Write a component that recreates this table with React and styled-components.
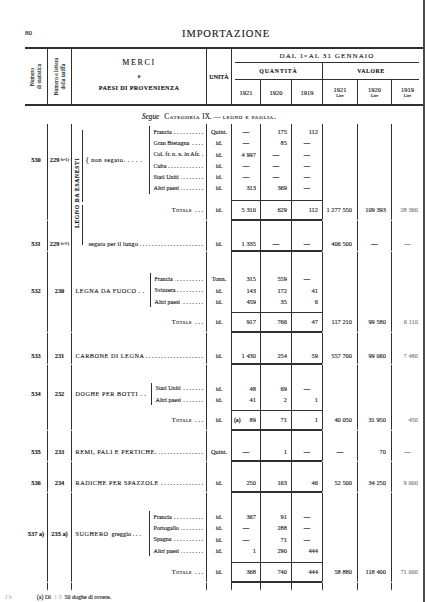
import React from "react";
import styled, { createGlobalStyle } from "styled-components";

const INK = "#161616";
const RULE = "#2f2f2f";
const LH = 11.3;
const TOT = 19.5;
const COLS = "22px 24px 135px 25px 29px 31px 31px 35px 34px 32px";

const GlobalStyle = createGlobalStyle`
  *, *::before, *::after { box-sizing: border-box; }
  html, body { margin: 0; padding: 0; background: #fff; }
  body {
    font-family: "Liberation Serif", "DejaVu Serif", serif;
    color: ${INK};
    -webkit-text-stroke: 0.12px ${INK};
  }
`;

const rule = ({ $rule }) =>
  $rule === "thick"
    ? `border-left: 1.5px solid ${RULE};`
    : $rule === "thin"
    ? `border-left: 1px solid ${RULE};`
    : "";

const Sheet = styled.div`
  width: 425px;
  height: 602px;
  padding-left: 25px;
  border-right: 2px solid #4a4a4a;
  overflow: hidden;
  display: flex;
  flex-direction: column;
`;

/* ---------- title ---------- */

const TitleBar = styled.header`
  height: 47px;
  flex-shrink: 0;
  padding-top: 19px;
  display: grid;
  grid-template-columns: 157px auto;
  align-items: center;
`;

const PageNo = styled.span`
  font-size: 7px;
`;

const Title = styled.h1`
  margin: 0;
  font-size: 10.5px;
  font-weight: normal;
  letter-spacing: 0.9px;
`;

/* ---------- column heads ---------- */

const Head = styled.div`
  display: grid;
  flex-shrink: 0;
  grid-template-columns: ${COLS};
  height: 59px;
  border-top: 2px solid ${RULE};
  border-bottom: 2px solid ${RULE};
`;

const HCell = styled.div`
  ${rule};
  display: flex;
  align-items: center;
  justify-content: center;
  min-width: 0;
`;

const Turned = styled.div`
  writing-mode: vertical-rl;
  transform: rotate(180deg);
  font-size: 5.6px;
  line-height: 7px;
  text-align: center;
  white-space: nowrap;
`;

const GoodsHead = styled(HCell)`
  flex-direction: column;
  justify-content: flex-start;
  padding-top: 8px;
`;

const Merci = styled.div`
  font-size: 8px;
  line-height: 12px;
  letter-spacing: 1.6px;
`;

const Conj = styled.div`
  font-size: 6px;
  line-height: 14px;
`;

const Paesi = styled.div`
  font-size: 6.2px;
  line-height: 10px;
  font-weight: bold;
  letter-spacing: 0.35px;
`;

const UnitHead = styled.span`
  font-size: 6px;
  font-weight: bold;
`;

const Period = styled.div`
  grid-column: 5 / -1;
  ${rule};
  display: grid;
  grid-template-columns: 28px 31px 31px 35px 34px 32px;
  grid-template-rows: 14px 17px 1fr;
`;

const PeriodTitle = styled.div`
  grid-column: 1 / -1;
  margin: 0 4px 0 3px;
  border-bottom: 1px solid ${RULE};
  display: flex;
  align-items: center;
  justify-content: center;
  font-size: 7px;
  letter-spacing: 1.1px;
  white-space: nowrap;
  sup {
    font-size: 4.5px;
    letter-spacing: 0;
    margin-right: 2px;
  }
`;

const GroupHead = styled.div`
  grid-column: span 3;
  ${rule};
  margin: ${(p) => p.$margin};
  border-bottom: 1px solid ${RULE};
  display: flex;
  align-items: center;
  justify-content: center;
  font-size: 5.8px;
  font-weight: bold;
  letter-spacing: ${(p) => p.$ls}px;
`;

const YearCell = styled.div`
  ${rule};
  display: flex;
  flex-direction: column;
  align-items: center;
  justify-content: center;
  font-size: 6.5px;
  line-height: 7px;
`;

const Lire = styled.span`
  font-size: 4.6px;
  line-height: 6px;
`;

/* ---------- body ---------- */

const Segue = styled.div`
  height: 18px;
  flex-shrink: 0;
  padding: 3px 0 0 117px;
  display: flex;
  align-items: center;
  font-size: 7.2px;
  white-space: nowrap;
  i {
    margin-right: 3px;
  }
`;

const Caps = styled.span`
  font-variant: small-caps;
  letter-spacing: 0.7px;
  margin: 0 2px;
`;

const BlockGrid = styled.div`
  display: grid;
  flex-shrink: 0;
  grid-template-columns: ${COLS};
  grid-template-rows: ${(p) => p.$rows};
`;

const Col = styled.div`
  ${rule};
  grid-column: ${(p) => p.$col};
  grid-row: ${(p) => p.$row || "auto"};
  display: flex;
  flex-direction: column;
  min-width: 0;
  border-bottom: 2px solid ${(p) => (p.$foot ? RULE : "transparent")};
  color: ${(p) => (p.$faded ? "#7a7a7a" : "inherit")};
  -webkit-text-stroke-color: ${(p) => (p.$faded ? "#7a7a7a" : INK)};
`;

const Lines = styled.div`
  flex-shrink: 0;
  padding-top: ${(p) => p.$top}px;
  display: flex;
  flex-direction: column;
`;

const Line = styled.div`
  height: ${LH}px;
  line-height: ${LH}px;
  font-size: 6.4px;
  white-space: nowrap;
  overflow: hidden;
  text-align: ${(p) => p.$align || "right"};
  padding-right: ${(p) => (p.$align === "center" ? 0 : p.$pr ?? 4)}px;
`;

const Mid = styled.div`
  height: ${(p) => p.$n * LH}px;
  display: flex;
  align-items: center;
  justify-content: center;
  font-size: 6.4px;
  font-weight: bold;
  white-space: nowrap;
`;

const Small = styled.span`
  font-size: 5px;
  font-weight: normal;
  margin-left: 1.5px;
`;

const Tot = styled.div`
  margin-top: auto;
  flex-shrink: 0;
  height: ${TOT}px;
  display: flex;
  align-items: center;
  justify-content: ${(p) => p.$justify || "flex-end"};
  padding: 0 ${(p) => p.$pr ?? 4}px 0 ${(p) => p.$pl ?? 0}px;
  border-top: 1px solid ${(p) => (p.$ruled ? RULE : "transparent")};
  font-size: 6.4px;
  white-space: nowrap;
`;

const Mark = styled.span`
  font-weight: bold;
  font-size: 5.6px;
`;

const Upper = styled.div`
  flex-shrink: 0;
  padding-top: ${(p) => p.$top}px;
  display: flex;
`;

const MainDesc = styled.div`
  flex: 0 0 ${(p) => p.$w}px;
  display: flex;
  align-items: center;
  padding-left: ${(p) => p.$pl}px;
  font-size: 6.2px;
  letter-spacing: 0.55px;
  white-space: nowrap;
`;

const Lower = styled.span`
  letter-spacing: 0.1px;
  margin-left: 3px;
`;

const BraceMark = styled.span`
  font-size: 9px;
  color: #555;
  margin-right: 2px;
  letter-spacing: 0;
`;

const Countries = styled.div`
  flex: 1;
  min-width: 0;
  border-left: 1px solid ${RULE};
  padding-left: 4px;
  display: flex;
  flex-direction: column;
`;

const Country = styled.div`
  height: ${LH}px;
  display: flex;
  align-items: center;
  padding-right: 3px;
  font-size: 6.1px;
  white-space: nowrap;
`;

const DescLine = styled.div`
  height: ${LH}px;
  display: flex;
  align-items: center;
  padding: 0 3px 0 ${(p) => p.$pl}px;
  font-size: 6.2px;
  letter-spacing: ${(p) => (p.$caps ? 0.55 : 0.2)}px;
  white-space: nowrap;
`;

const Leader = styled.span`
  flex: 1;
  min-width: 0;
  overflow: hidden;
  direction: rtl;
  margin-left: 2px;
  letter-spacing: 0;
  &::after {
    content: ". . . . . . . . . . . . . . . . . . . . . . . . . . . . . . . . . . . . . . . . . . . . . . . . . .";
  }
`;

const TotLabel = styled.span`
  font-variant: small-caps;
  letter-spacing: 0.6px;
  margin-right: 3px;
`;

const GroupDesc = styled.div`
  ${rule};
  grid-column: 3;
  grid-row: 1 / 3;
  display: flex;
  min-width: 0;
`;

const LabelCol = styled.div`
  width: 10px;
  padding-top: 44px;
  display: flex;
  justify-content: center;
`;

const LabelText = styled.div`
  writing-mode: vertical-rl;
  transform: rotate(180deg);
  height: 60px;
  font-size: 5.6px;
  font-weight: bold;
  letter-spacing: 0.7px;
  text-align: center;
  white-space: nowrap;
`;

const BraceCol = styled.div`
  width: 2px;
  display: flex;
  flex-direction: column;
`;

const BraceSeg = styled.div`
  margin-top: ${(p) => p.$mt}px;
  height: ${(p) => p.$h}px;
  border-left: 1px solid ${RULE};
`;

const SubStack = styled.div`
  flex: 1;
  min-width: 0;
  display: flex;
  flex-direction: column;
`;

const SubDesc = styled.div`
  height: ${(p) => p.$h}px;
  padding-bottom: 2px;
  display: flex;
  flex-direction: column;
`;

const Footnote = styled.div`
  height: 11px;
  flex-shrink: 0;
  display: flex;
  align-items: center;
  font-size: 6px;
  white-space: nowrap;
`;

const NoteText = styled.span`
  margin-left: 25px;
`;

const Faded = styled.span`
  color: #b8b8b8;
  -webkit-text-stroke-color: #b8b8b8;
  margin: ${(p) => p.$m || "0 3px"};
`;

/* ---------- data ---------- */

const entries = {
  e530: {
    num: "530",
    tariff: <>229<Small>b-1)</Small></>,
    top: 2,
    main: <><BraceMark>{"{"}</BraceMark>non segato. . . . .</>,
    mainW: 64.5,
    mainPl: 1,
    rows: [
      { c: "Francia", u: "Quint.", q: ["—", "175", "112"] },
      { c: "Gran Bretagna", u: "id.", q: ["—", "85", "—"] },
      { c: "Col. fr. n. n. in Afr.", u: "id.", q: ["4 997", "—", "—"] },
      { c: "Cuba", u: "id.", q: ["—", "—", "—"] },
      { c: "Stati Uniti", u: "id.", q: ["—", "—", "—"] },
      { c: "Altri paesi", u: "id.", q: ["313", "369", "—"] },
    ],
    total: { u: "id.", q: ["5 310", "629", "112"], v: ["1 277 550", "109 393", "28 360"] },
  },
  e531: {
    num: "531",
    tariff: <>229<Small>b-2)</Small></>,
    top: 17.35,
    desc: "segato per il lungo",
    descPl: 4.5,
    single: { u: "id.", q: ["1 335", "—", "—"], v: ["406 500", "—", "—"] },
  },
  e532: {
    num: "532",
    tariff: "230",
    top: 21.35,
    main: "LEGNA DA FUOCO . .",
    mainW: 77.5,
    rows: [
      { c: "Francia", u: "Tonn.", q: ["315", "559", "—"] },
      { c: "Svizzera", u: "id.", q: ["143", "172", "41"] },
      { c: "Altri paesi", u: "id.", q: ["459", "35", "6"] },
    ],
    total: { u: "id.", q: ["917", "766", "47"], v: ["117 210", "99 580", "6 110"] },
  },
  e533: {
    num: "533",
    tariff: "231",
    top: 17,
    desc: "CARBONE DI LEGNA",
    caps: true,
    single: { u: "id.", q: ["1 430", "254", "59"], v: ["557 700", "99 060", "7 480"] },
  },
  e534: {
    num: "534",
    tariff: "232",
    top: 17.6,
    main: "DOGHE PER BOTTI . .",
    mainW: 78.5,
    rows: [
      { c: "Stati Uniti", u: "id.", q: ["48", "69", "—"] },
      { c: "Altri paesi", u: "id.", q: ["41", "2", "1"] },
    ],
    total: { u: "id.", mark: "(a)", q: ["89", "71", "1"], v: ["40 050", "31 950", "450"] },
  },
  e535: {
    num: "535",
    tariff: "233",
    top: 15,
    desc: "REMI, PALI E PERTICHE.",
    caps: true,
    single: { u: "Quint.", q: ["—", "1", "—"], v: ["—", "70", "—"] },
  },
  e536: {
    num: "536",
    tariff: "234",
    top: 15,
    desc: "RADICHE PER SPAZZOLE",
    caps: true,
    single: { u: "id.", q: ["250", "163", "46"], v: ["52 500", "34 250", "9 000"] },
  },
  e537: {
    num: "537 a)",
    tariff: "235 a)",
    top: 18,
    main: <>SUGHERO<Lower>greggio . . .</Lower></>,
    mainW: 76.5,
    rows: [
      { c: "Francia", u: "id.", q: ["367", "91", "—"] },
      { c: "Portogallo", u: "id.", q: ["—", "288", "—"] },
      { c: "Spagna", u: "id.", q: ["—", "71", "—"] },
      { c: "Altri paesi", u: "id.", q: ["1", "290", "444"] },
    ],
    total: { u: "id.", q: ["368", "740", "444"], v: ["58 880", "118 400", "71 000"] },
  },
};

/* ---------- pieces ---------- */

const Qty = ({ v }) => (
  <Line $align={v === "—" ? "center" : "right"}>{v}</Line>
);

function DescBody({ e }) {
  if (!e.rows) {
    return (
      <Lines $top={e.top}>
        <DescLine $pl={e.descPl ?? 3.5} $caps={e.caps}>
          {e.desc}
          <Leader />
        </DescLine>
      </Lines>
    );
  }
  return (
    <>
      <Upper $top={e.top}>
        <MainDesc $w={e.mainW} $pl={e.mainPl ?? 3.5}>
          {e.main}
        </MainDesc>
        <Countries>
          {e.rows.map((r) => (
            <Country key={r.c}>
              {r.c}
              <Leader />
            </Country>
          ))}
        </Countries>
      </Upper>
      <Tot $pr={3}>
        <TotLabel>Totale</TotLabel>. . .
      </Tot>
    </>
  );
}

function EntryCells({ e, row }) {
  const n = e.rows ? e.rows.length : 1;
  return (
    <>
      <Col $col={1} $row={row}>
        <Lines $top={e.top}>
          <Mid $n={n}>{e.num}</Mid>
        </Lines>
      </Col>
      <Col $col={2} $row={row} $rule="thick">
        <Lines $top={e.top}>
          <Mid $n={n}>{e.tariff}</Mid>
        </Lines>
      </Col>
      <Col $col={4} $row={row} $rule="thin">
        <Lines $top={e.top}>
          {e.rows ? (
            e.rows.map((r) => (
              <Line key={r.c} $align="center">
                {r.u}
              </Line>
            ))
          ) : (
            <Line $align="center">{e.single.u}</Line>
          )}
        </Lines>
        {e.rows && <Tot $justify="center" $pr={0}>{e.total.u}</Tot>}
      </Col>
      {[0, 1, 2].map((i) => (
        <Col key={`q${i}`} $col={5 + i} $row={row} $rule="thin" $foot>
          <Lines $top={e.top}>
            {e.rows ? (
              e.rows.map((r) => <Qty key={r.c} v={r.q[i]} />)
            ) : (
              <Qty v={e.single.q[i]} />
            )}
          </Lines>
          {e.rows && (
            <Tot
              $ruled
              $pl={2}
              $justify={i === 0 && e.total.mark ? "space-between" : "flex-end"}
            >
              {i === 0 && e.total.mark && <Mark>{e.total.mark}</Mark>}
              {e.total.q[i]}
            </Tot>
          )}
        </Col>
      ))}
      {[0, 1, 2].map((i) => {
        const v = e.rows ? e.total.v[i] : e.single.v[i];
        return (
          <Col
            key={`v${i}`}
            $col={8 + i}
            $row={row}
            $rule={i === 0 ? "thick" : "thin"}
            $faded={i === 2}
          >
            {e.rows ? (
              <Tot $pr={5} $justify={v === "—" ? "center" : "flex-end"}>
                {v}
              </Tot>
            ) : (
              <Lines $top={e.top}>
                <Line $align={v === "—" ? "center" : "right"} $pr={5}>
                  {v}
                </Line>
              </Lines>
            )}
          </Col>
        );
      })}
    </>
  );
}

function Block({ e, height }) {
  return (
    <BlockGrid $rows={`${height}px`}>
      <EntryCells e={e} row={1} />
      <Col $col={3} $row={1} $rule="thick">
        <DescBody e={e} />
      </Col>
    </BlockGrid>
  );
}

function WoodGroup() {
  return (
    <BlockGrid $rows="97px 31px">
      <EntryCells e={entries.e530} row={1} />
      <EntryCells e={entries.e531} row={2} />
      <GroupDesc $rule="thick">
        <LabelCol>
          <LabelText>LEGNO DA ESANESTI</LabelText>
        </LabelCol>
        <BraceCol>
          <BraceSeg $mt={6} $h={72} />
          <BraceSeg $mt={3} $h={40} />
        </BraceCol>
        <SubStack>
          <SubDesc $h={97}>
            <DescBody e={entries.e530} />
          </SubDesc>
          <SubDesc $h={31}>
            <DescBody e={entries.e531} />
          </SubDesc>
        </SubStack>
      </GroupDesc>
    </BlockGrid>
  );
}

const RULES = ["none", "thick", "thick", "thin", "thin", "thin", "thin", "thick", "thin", "thin"];

export default function App() {
  return (
    <>
      <GlobalStyle />
      <Sheet>
        <TitleBar>
          <PageNo>80</PageNo>
          <Title>IMPORTAZIONE</Title>
        </TitleBar>

        <Head>
          <HCell>
            <Turned>
              Numero
              <br />
              di statistica
            </Turned>
          </HCell>
          <HCell $rule="thick">
            <Turned>
              Numero e lettera
              <br />
              della tariffa
            </Turned>
          </HCell>
          <GoodsHead $rule="thick">
            <Merci>MERCI</Merci>
            <Conj>e</Conj>
            <Paesi>PAESI DI PROVENIENZA</Paesi>
          </GoodsHead>
          <HCell $rule="thin">
            <UnitHead>UNITÀ</UnitHead>
          </HCell>
          <Period $rule="thin">
            <PeriodTitle>
              DAL 1<sup>o</sup> AL 31 GENNAIO
            </PeriodTitle>
            <GroupHead $margin="0 0 0 3px" $ls={0.9}>
              QUANTITÀ
            </GroupHead>
            <GroupHead $rule="thick" $margin="0 4px 0 0" $ls={0.6}>
              VALORE
            </GroupHead>
            <YearCell>1921</YearCell>
            <YearCell $rule="thin">1920</YearCell>
            <YearCell $rule="thin">1919</YearCell>
            <YearCell $rule="thick">
              1921<Lire>Lire</Lire>
            </YearCell>
            <YearCell $rule="thin">
              1920<Lire>Lire</Lire>
            </YearCell>
            <YearCell $rule="thin">
              1919<Lire>Lire</Lire>
            </YearCell>
          </Period>
        </Head>

        <Segue>
          <i>Segue</i>
          <Caps>Categoria</Caps> IX. — <Caps>legno e paglia.</Caps>
        </Segue>

        <WoodGroup />
        <Block e={entries.e532} height={81} />
        <Block e={entries.e533} height={32} />
        <Block e={entries.e534} height={66} />
        <Block e={entries.e535} height={31} />
        <Block e={entries.e536} height={31} />
        <Block e={entries.e537} height={90} />

        <BlockGrid $rows="8px">
          {RULES.map((r, i) => (
            <Col key={i} $col={i + 1} $rule={r} />
          ))}
        </BlockGrid>

        <Footnote>
          <Faded $m="0 0 0 -20px">J b</Faded>
          <NoteText>(a) Di</NoteText>
          <Faded>1 3</Faded>
          50 doghe di rovere.
        </Footnote>
      </Sheet>
    </>
  );
}
